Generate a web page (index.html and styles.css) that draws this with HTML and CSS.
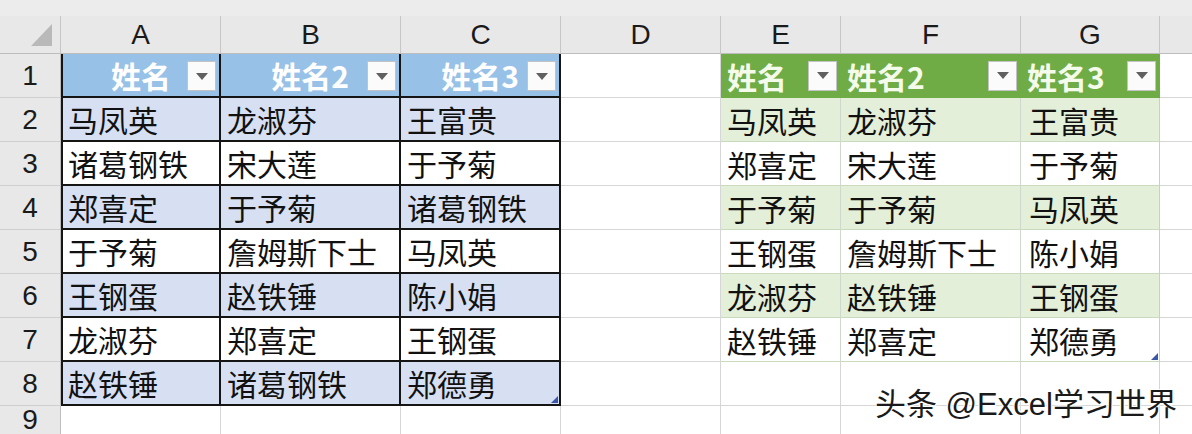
FILE: index.html
```html
<!DOCTYPE html>
<html lang="zh">
<head>
<meta charset="utf-8">
<link rel="stylesheet" href="styles.css">
</head>
<body>
<div class="sheet">
  <div class="band"></div>

  <div class="ch corner"><span class="tri"></span></div>
  <div class="ch">A</div><div class="ch">B</div><div class="ch">C</div><div class="ch">D</div>
  <div class="ch">E</div><div class="ch">F</div><div class="ch">G</div><div class="ch last"></div>

  <!-- row 1 -->
  <div class="rh">1</div>
  <div class="c lt lh first"><span class="ht">姓名</span><span class="fb abs"></span></div>
  <div class="c lt lh"><span class="ht">姓名2</span><span class="fb abs"></span></div>
  <div class="c lt lh"><span class="ht">姓名3</span><span class="fb abs"></span></div>
  <div class="c"></div>
  <div class="c rt rhd"><span class="gt">姓名</span><span class="fb"></span></div>
  <div class="c rt rhd"><span class="gt">姓名2</span><span class="fb"></span></div>
  <div class="c rt rhd"><span class="gt">姓名3</span><span class="fb"></span></div>
  <div class="c last"></div>

  <!-- row 2 -->
  <div class="rh">2</div>
  <div class="c lt lb first">马凤英</div><div class="c lt lb">龙淑芬</div><div class="c lt lb">王富贵</div>
  <div class="c"></div>
  <div class="c rt rg">马凤英</div><div class="c rt rg">龙淑芬</div><div class="c rt rg gc">王富贵</div>
  <div class="c last"></div>

  <!-- row 3 -->
  <div class="rh">3</div>
  <div class="c lt lw first">诸葛钢铁</div><div class="c lt lw">宋大莲</div><div class="c lt lw">于予菊</div>
  <div class="c"></div>
  <div class="c rt rw">郑喜定</div><div class="c rt rw">宋大莲</div><div class="c rt rw gc">于予菊</div>
  <div class="c last"></div>

  <!-- row 4 -->
  <div class="rh">4</div>
  <div class="c lt lb first">郑喜定</div><div class="c lt lb">于予菊</div><div class="c lt lb">诸葛钢铁</div>
  <div class="c"></div>
  <div class="c rt rg">于予菊</div><div class="c rt rg">于予菊</div><div class="c rt rg gc">马凤英</div>
  <div class="c last"></div>

  <!-- row 5 -->
  <div class="rh">5</div>
  <div class="c lt lw first">于予菊</div><div class="c lt lw">詹姆斯下士</div><div class="c lt lw">马凤英</div>
  <div class="c"></div>
  <div class="c rt rw">王钢蛋</div><div class="c rt rw">詹姆斯下士</div><div class="c rt rw gc">陈小娟</div>
  <div class="c last"></div>

  <!-- row 6 -->
  <div class="rh">6</div>
  <div class="c lt lb first">王钢蛋</div><div class="c lt lb">赵铁锤</div><div class="c lt lb">陈小娟</div>
  <div class="c"></div>
  <div class="c rt rg">龙淑芬</div><div class="c rt rg">赵铁锤</div><div class="c rt rg gc">王钢蛋</div>
  <div class="c last"></div>

  <!-- row 7 -->
  <div class="rh">7</div>
  <div class="c lt lw first">龙淑芬</div><div class="c lt lw">郑喜定</div><div class="c lt lw">王钢蛋</div>
  <div class="c"></div>
  <div class="c rt rw">赵铁锤</div><div class="c rt rw">郑喜定</div><div class="c rt rw gc">郑德勇<span class="handle"></span></div>
  <div class="c last"></div>

  <!-- row 8 -->
  <div class="rh">8</div>
  <div class="c lt lb first">赵铁锤</div><div class="c lt lb">诸葛钢铁</div><div class="c lt lb">郑德勇<span class="handle"></span></div>
  <div class="c"></div>
  <div class="c"></div><div class="c"></div><div class="c gedge"></div>
  <div class="c last"></div>

  <!-- row 9 -->
  <div class="rh r9">9</div>
  <div class="c r9"></div><div class="c r9"></div><div class="c r9"></div><div class="c r9"></div>
  <div class="c r9"></div><div class="c r9"></div><div class="c r9"></div><div class="c r9 last"></div>

  <div class="mark">头条 @Excel学习世界</div>
</div>
</body>
</html>
```

FILE: styles.css
```css
html, body {
  margin: 0;
  padding: 0;
  background: #ffffff;
}

.sheet {
  position: relative;
  width: 1192px;
  height: 434px;
  overflow: hidden;
  display: grid;
  grid-template-columns: 61px 160px 180px 160px 160px 120px 180px 139px 32px;
  grid-template-rows: 16px 38px repeat(8, 44px) 28px;
  font-family: "Noto Sans CJK SC", "Noto Sans", sans-serif;
  font-size: 30px;
  color: #111111;
}

.band {
  grid-column: 1 / -1;
  background: #ececec;
}

.ch {
  box-sizing: border-box;
  background: #e8e8e8;
  border-right: 1px solid #c6c6c6;
  border-bottom: 1px solid #bdbdbd;
  display: flex;
  align-items: center;
  justify-content: center;
  font-family: "Liberation Sans", "DejaVu Sans", sans-serif;
  font-size: 28px;
  color: #1a1a1a;
}

.ch.last { border-right: none; }

.corner {
  position: relative;
}

.tri {
  position: absolute;
  right: 8px;
  bottom: 7px;
  width: 0;
  height: 0;
  border-left: 21px solid transparent;
  border-bottom: 22px solid #b9b9b9;
}

.rh {
  box-sizing: border-box;
  background: #e8e8e8;
  border-right: 1px solid #bdbdbd;
  border-bottom: 1px solid #cfcfcf;
  display: flex;
  align-items: center;
  justify-content: center;
  font-family: "Liberation Sans", "DejaVu Sans", sans-serif;
  font-size: 28px;
  color: #1a1a1a;
}

.c {
  box-sizing: border-box;
  position: relative;
  border-right: 1px solid #d6d6d6;
  border-bottom: 1px solid #d6d6d6;
  display: flex;
  align-items: center;
  padding-left: 6px;
  white-space: nowrap;
  background: #ffffff;
}

.c.last { border-right: none; }

.r9 { border-bottom: none; }

/* left table */
.lt {
  border-right: 2px solid #151515;
  border-bottom: 2px solid #151515;
}

.lt.first { border-left: 2px solid #151515; padding-left: 5px; }

.lh {
  background: #97c1e7;
  justify-content: center;
  padding-left: 0;
}

.lh.first { padding-left: 0; }

.ht {
  color: #ffffff;
  font-weight: 700;
}

.lb { background: #d6e0f2; }
.lw { background: #ffffff; }

.fb {
  box-sizing: border-box;
  width: 29px;
  height: 30px;
  background: #fbfbfb;
  border: 1px solid #c3c3c3;
  display: flex;
  align-items: center;
  justify-content: center;
  flex: none;
}

.fb::after {
  content: "";
  width: 0;
  height: 0;
  border-left: 6px solid transparent;
  border-right: 6px solid transparent;
  border-top: 7px solid #606060;
}

.fb.abs {
  position: absolute;
  right: 3px;
  top: 7px;
}

/* right table */
.rt {
  border-right: 1px solid #d0d7cc;
  border-bottom: 1px solid #c9dabd;
}

.rhd {
  background: #6fac46;
  justify-content: space-between;
  padding-right: 4px;
  border-right: none;
  border-bottom: 1px solid #6fac46;
}

.gt {
  color: #f5fbea;
  font-weight: 700;
}

.rg { background: #e3efd9; }
.rw { background: #ffffff; }
.gc { padding-left: 8px; border-right: 1px solid #c3d6b5; }
.gedge { border-right: 1px solid #d6d6d6; }

.handle {
  position: absolute;
  right: 1px;
  bottom: 1px;
  width: 0;
  height: 0;
  border-left: 7px solid transparent;
  border-bottom: 7px solid #3c57a6;
}

.mark {
  position: absolute;
  left: 875px;
  top: 385px;
  font-family: "Liberation Sans", "Noto Sans CJK SC", sans-serif;
  font-size: 31px;
  line-height: 40px;
  color: #1a1a1a;
  white-space: nowrap;
  text-shadow: 1px 1px 0 #ffffff, -1px -1px 0 #ffffff, 1px -1px 0 #ffffff, -1px 1px 0 #ffffff;
}
```
